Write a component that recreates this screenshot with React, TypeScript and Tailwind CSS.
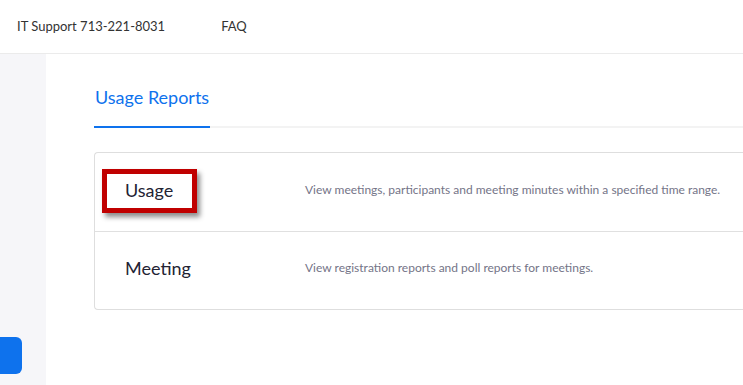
import React from "react"

const reports = [
  { id: "usage", title: "Usage", description: "View meetings, participants and meeting minutes within a specified time range.", highlight: true },
  { id: "meeting", title: "Meeting", description: "View registration reports and poll reports for meetings.", highlight: false },
]

export default function App() {
  return (
    <div className="w-[743px] h-[385px] overflow-hidden bg-white font-['Lato','Open_Sans',sans-serif] flex flex-col">
      <header className="h-[54px] flex-none flex items-center border-b border-[#ebebeb] pl-[17px] text-[13px] text-[#333]">
        <span>IT Support 713-221-8031</span>
        <span className="ml-[56px]">FAQ</span>
      </header>
      <div className="flex flex-1 min-h-0">
        <aside className="w-[46px] flex-none bg-[#f6f6f9] flex flex-col justify-end pb-[11px]">
          <div className="h-[37px] w-[22px] bg-[#0e72ed] rounded-r-[6px]" />
        </aside>
        <main className="flex-1 pl-[48px] pt-[30px]">
          <div className="flex border-b-2 border-[#f3f3f3]">
            <div className="pl-[1px] pr-[1px] pb-[16px] -mb-[2px] border-b-2 border-[#0e72ed] text-[18px] leading-[26px] text-[#0e72ed]">
              Usage Reports
            </div>
          </div>
          <div className="mt-[24px] border border-r-0 border-[#dedede] rounded-l-[4px]">
            {reports.map((r, i) => (
              <div key={r.id} className={`h-[78px] flex items-center pb-[5px] ${i > 0 ? "border-t border-[#e0e0e0]" : ""}`}>
                <div className="relative w-[180px] ml-[30px] text-[18px] leading-[26px] text-[#232333]">
                  {r.title}
                  {r.highlight && (
                    <div className="absolute left-[-23px] top-[-8px] w-[95px] h-[44px] border-[5px] border-[#c00000] shadow-[3px_4px_5px_rgba(0,0,0,0.45)]" />
                  )}
                </div>
                <div className="text-[12px] text-[#747487]">{r.description}</div>
              </div>
            ))}
          </div>
        </main>
      </div>
    </div>
  )
}
